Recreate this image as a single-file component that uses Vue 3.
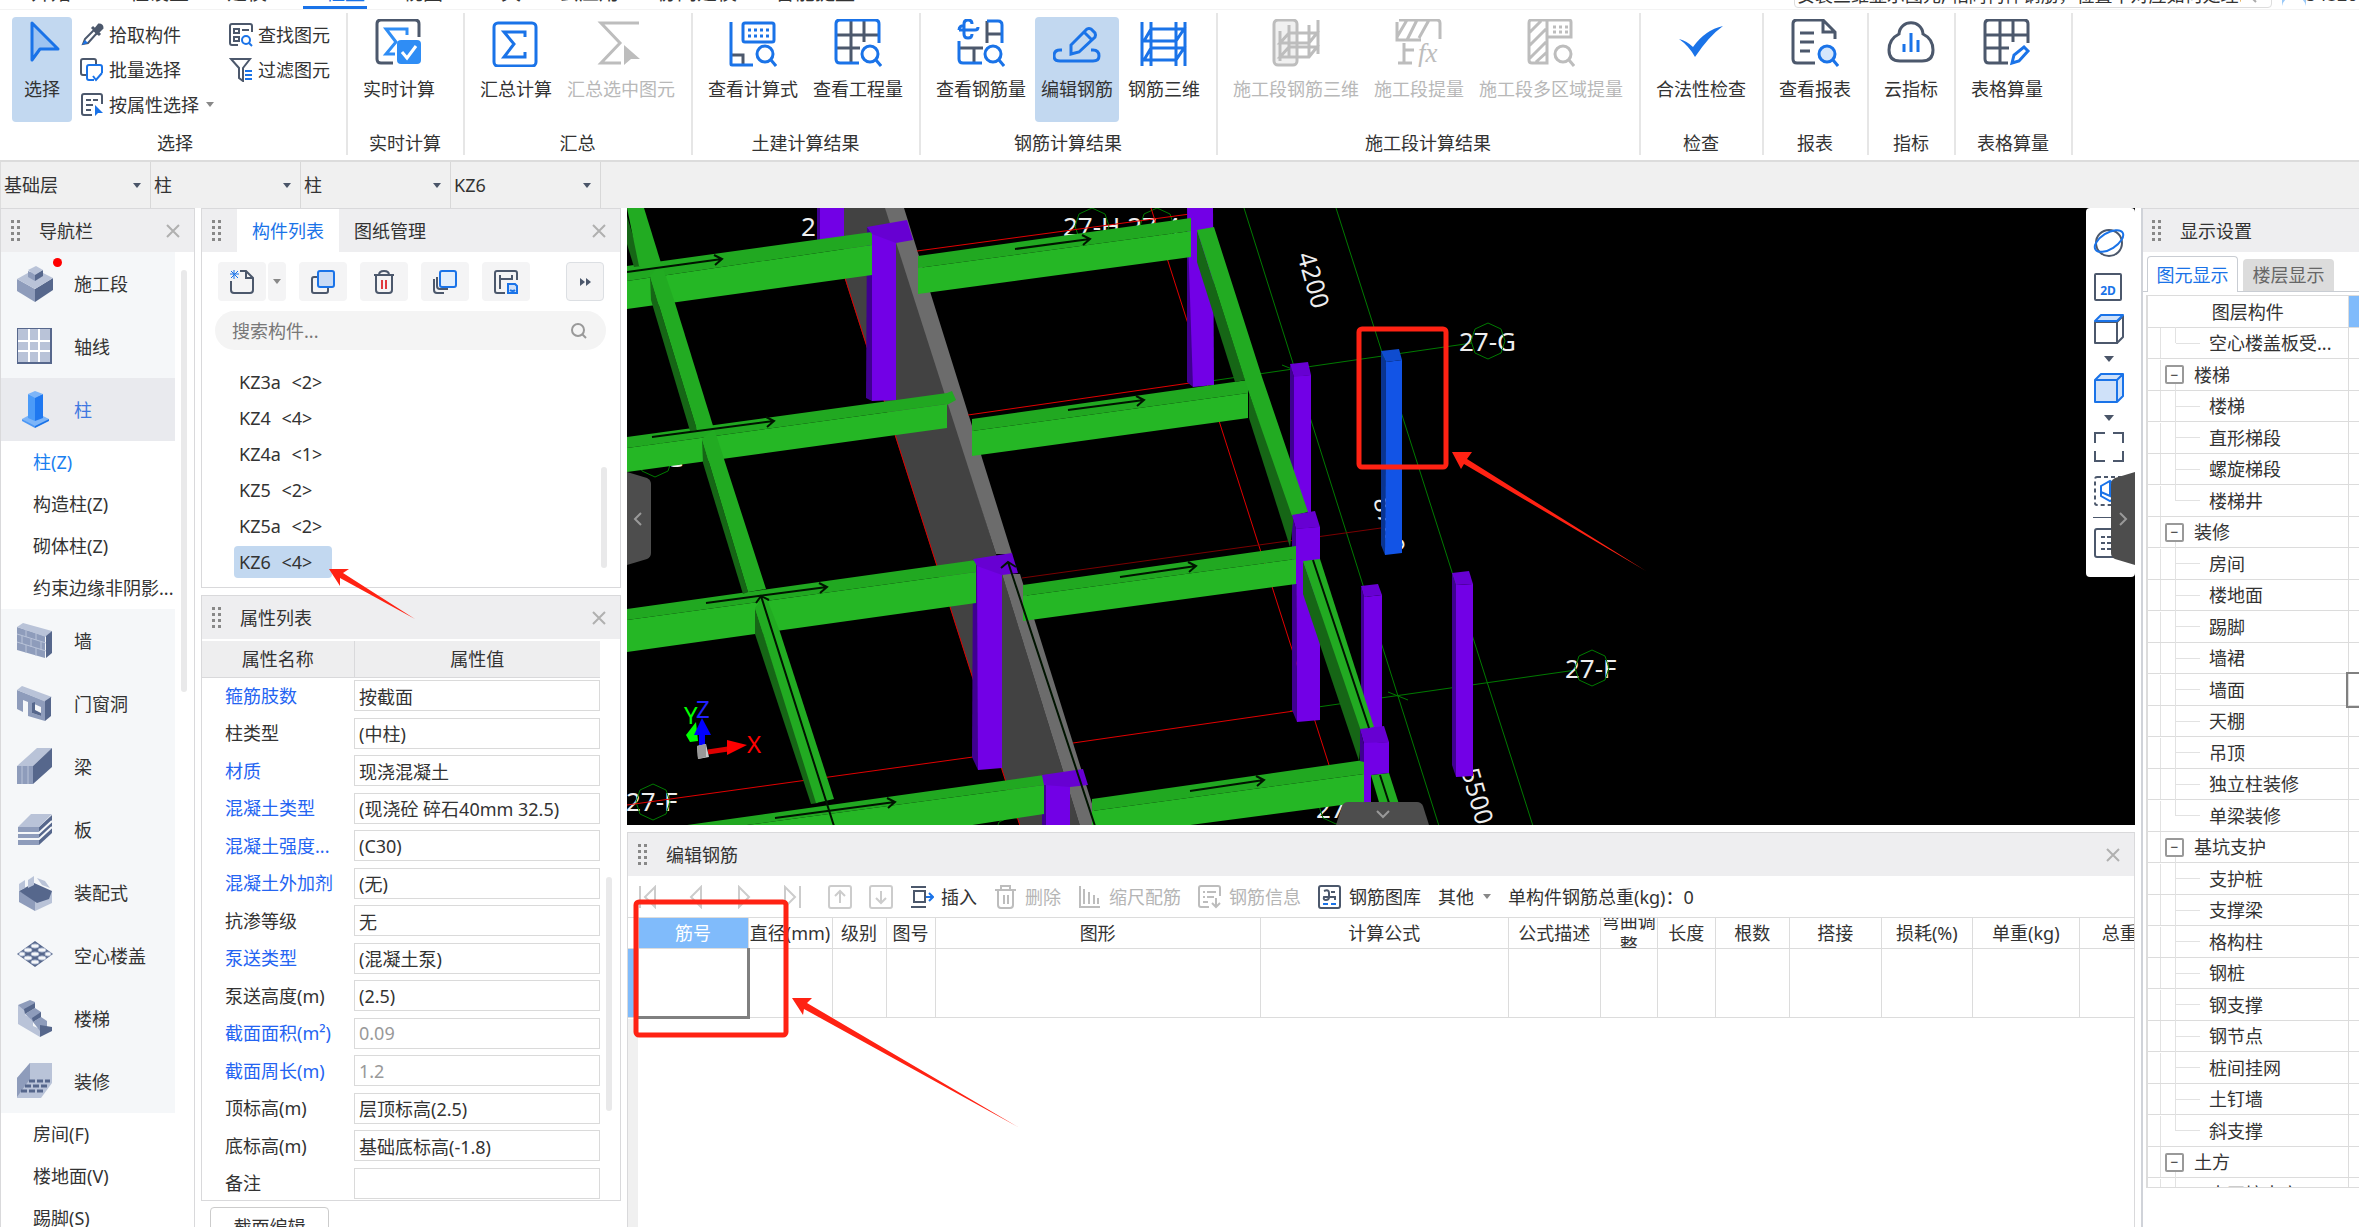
<script setup>
import { ref } from 'vue'

const B = '#1a73e8'
const S = '#4c586c'
const G = '#bdbdbd'

const tabs = ['开始', '工程设置', '建模', '工程量', '视图', '工具', '云应用', '协同建模', '智能提量']

const magnifier = (c, f = 'none') =>
  `<g stroke="${c}" stroke-width="3" fill="${f}"><circle cx="36" cy="35" r="8"/><path d="M42 41l5 6"/></g>`
const ladder = (c) =>
  `<g stroke="${c}" stroke-width="3" fill="none"><path d="M2 3v44M11 3v44M36 3v44M45 3v44M11 10h33l-8 12H4zM11 29h33l-8 12H4z"/></g>`
const shade = ['#b9c3d8', '#8e9cbb', '#56678c']

const icons = {
  select: `<path d="M14 4v37l8-11h18z" fill="#9ec3f0" stroke="${B}" stroke-width="3" stroke-linejoin="round"/>`,
  realtime: `<path d="M18 44H6q-4 0-4-4V5q0-4 4-4h34q4 0 4 4v13" fill="none" stroke="${S}" stroke-width="3"/><path d="M32 16v-6H11l10 13-10 12h9" fill="none" stroke="#2f8df5" stroke-width="3"/><rect x="22" y="21" width="24" height="24" rx="4" fill="#2f8df5"/><path d="M27 33l5 6 9-12" fill="none" stroke="#fff" stroke-width="3"/>`,
  sum: `<rect x="2" y="4" width="42" height="43" rx="4" fill="none" stroke="${B}" stroke-width="3"/><path d="M33 18v-5H12l10 12-10 13h21v-5" fill="none" stroke="${B}" stroke-width="3"/>`,
  sumSel: `<path d="M42 4H4l19 20L4 44h20" fill="none" stroke="${G}" stroke-width="3"/><path d="M27 26l16 14h-9l-7 6z" fill="${G}"/>`,
  formula: `<g fill="none" stroke-width="3"><path d="M2 36h12v10" stroke="${S}"/><path d="M2 3v42q0 1 1 1h21" stroke="${B}"/><rect x="14" y="4" width="31" height="19" rx="2" stroke="${B}"/></g><path d="M19 11h22M19 17h22" stroke="${B}" stroke-width="3" stroke-dasharray="3 3"/>${magnifier(B)}`,
  quantity: `<g fill="none" stroke-width="3"><path d="M17 1v43M30 1v22M2 16h43M2 29h24" stroke="${S}"/><path d="M45 24V5q0-4-4-4H6q-4 0-4 4v35q0 4 4 4h19" stroke="${B}"/></g>${magnifier(B)}`,
  rebarQty: `<g fill="none" stroke-width="3"><path d="M2 11h16q3 0 3-3M15 5q0-4-4-4t-4 4v10q0 4 4 4t4-4M8 7q-6-1-6 4" stroke="${B}"/><path d="M30 24V2M30 15h15M2 29h24M17 29v15" stroke="${S}"/><path d="M30 2h11q4 0 4 4v18M2 22v18q0 4 4 4h19" stroke="${B}"/></g>${magnifier(B)}`,
  editRebar: `<g fill="none" stroke="${B}" stroke-width="3"><path d="M9 31H7q-6 0-6 6 0 5 6 5h33q6 0 6-5 0-6-6-6h-2" /><path d="M18 35v-9l16-16q2-1 4 0l4 4q1 2 0 4L26 33zM31 13l7 7"/></g>`,
  rebar3d: ladder(B),
  stage3d: `<rect x="2" y="1" width="23" height="45" rx="4" fill="#f0f0f0" stroke="${G}" stroke-width="3"/><g stroke="${G}" stroke-width="3" fill="none"><path d="M8 12v30M17 6v32M37 6v32M46 1v34M17 14h28l-8 10H8zM17 28h28l-8 10H8z"/></g>`,
  stageQty: `<g stroke="${G}" stroke-width="3" fill="none"><path d="M4 1h38q3 0 3 3v16M2 3v18h24M12 21L22 1M24 19L34 1M2 18L12 1M9 24v20M3 44h14M9 31h10"/></g><text x="23" y="43" font-family="Liberation Serif, serif" font-style="italic" font-size="27" fill="${G}">fx</text>`,
  stageArea: `<g stroke="${G}" stroke-width="3" fill="none"><path d="M4 1h16v43H5q-3 0-3-3V4q0-3 2-3M2 14L14 2M2 27l17-17M2 40l17-17M9 43l11-10M20 1h22q2 0 2 2v15H20"/><path d="M26 8h15M26 13h15" stroke-dasharray="3 3"/></g>${magnifier(G)}`,
  check: `<path d="M2 20q8 2 14 8Q28 11 46 7 32 17 18 38 12 27 2 20z" fill="${B}"/>`,
  report: `<g fill="none" stroke="${S}" stroke-width="3"><path d="M24 44H6q-4 0-4-4V5q0-4 4-4h26l12 12v7M32 1v12h12M9 14h14M9 23h14M9 32h10"/></g>${magnifier(B, '#d5e6fb')}`,
  cloud: `<path d="M12 15C13 0 35 0 36 15q10 5 10 16 0 11-11 11H13Q2 42 2 31q0-11 10-16z" fill="none" stroke="${S}" stroke-width="3"/><path d="M17 25v8M24 14v19M31 21v12" stroke="${B}" stroke-width="3"/>`,
  tableCalc: `<g fill="none" stroke-width="3"><path d="M45 24V5q0-4-4-4H6q-4 0-4 4v35q0 4 4 4h19M17 1v43M30 1v22M2 16h43M2 29h24" stroke="${S}"/><path d="M29 44l2-8 10-8 4 4-9 10z" stroke="${B}"/></g>`
}

const smallIcons = {
  picker: `<path d="M3 21l2-5L14 7l3 3-9 10z" fill="none" stroke="${S}" stroke-width="2"/><path d="M12 4l8 8M15 7l4-5q3 0 3 3l-5 5z" stroke="${S}" stroke-width="3" fill="${S}"/><path d="M2 22l3-5 3 3z" fill="${B}"/>`,
  batch: `<rect x="1" y="1" width="15" height="16" rx="2" fill="#fff" stroke="${S}" stroke-width="2"/><path d="M14 22H9q-2 0-2-2V9q0-2 2-2h11q2 0 2 2v6" fill="#fff" stroke="${B}" stroke-width="2"/><path d="M13 18l3 4 6-7" fill="none" stroke="${B}" stroke-width="2"/>`,
  byProp: `<path d="M12 22H4q-2 0-2-2V3q0-2 2-2h16q2 0 2 2v8M6 7h5M13 7h5M6 12h7M6 17h5" fill="none" stroke="${S}" stroke-width="2"/><path d="M15 12l8 8h-5l-3 3z" fill="${B}"/>`,
  find: `<path d="M9 22H3q-2 0-2-2V3q0-2 2-2h18q2 0 2 2v6M5 6h5v4H5zM13 7h7M5 14h5v4H5z" fill="none" stroke="${S}" stroke-width="2"/><circle cx="17" cy="17" r="4" fill="none" stroke="${B}" stroke-width="2"/><path d="M20 20l3 3" stroke="${B}" stroke-width="2"/>`,
  filter: `<path d="M2 1h19l-7 9v13l-4-3V10z" fill="none" stroke="${S}" stroke-width="2"/><path d="M16 13h7M16 17h7M16 21h7" stroke="${B}" stroke-width="2"/>`
}

const groups = [
  { name: '实时计算', wide: true, items: [{ t: '实时计算', i: 'realtime' }] },
  { name: '汇总', items: [{ t: '汇总计算', i: 'sum' }, { t: '汇总选中图元', i: 'sumSel', off: true }] },
  { name: '土建计算结果', items: [{ t: '查看计算式', i: 'formula' }, { t: '查看工程量', i: 'quantity' }] },
  { name: '钢筋计算结果', items: [{ t: '查看钢筋量', i: 'rebarQty' }, { t: '编辑钢筋', i: 'editRebar', on: true }, { t: '钢筋三维', i: 'rebar3d' }] },
  { name: '施工段计算结果', items: [{ t: '施工段钢筋三维', i: 'stage3d', off: true }, { t: '施工段提量', i: 'stageQty', off: true }, { t: '施工段多区域提量', i: 'stageArea', off: true }] },
  { name: '检查', items: [{ t: '合法性检查', i: 'check' }] },
  { name: '报表', items: [{ t: '查看报表', i: 'report' }] },
  { name: '指标', items: [{ t: '云指标', i: 'cloud' }] },
  { name: '表格算量', wide: true, items: [{ t: '表格算量', i: 'tableCalc' }] }
]

const quick = [
  { label: '楼层', v: '基础层' },
  { label: '类别', v: '柱' },
  { label: '类型', v: '柱' },
  { label: '构件', v: 'KZ6' }
]

const [L, M, D] = shade
const navIcons = {
  stage: `<path d="M0 14l18 10v13L0 26z" fill="${M}"/><path d="M18 24l18-11v12L18 37z" fill="${D}"/><path d="M0 14L18 4l18 9-18 11z" fill="${L}"/><path d="M11 6v6l7 4V9z" fill="${M}"/><path d="M18 9v7l8-5V5z" fill="${D}"/><path d="M11 5l8-4 7 4-8 5z" fill="${L}"/>`,
  axis: `<path d="M0 0h35v36H0z" fill="${D}"/><path d="M1 1h32v33H1z" fill="${L}"/><path d="M12 1v33M22 1v33M1 13h32M1 23h32" stroke="#fff" stroke-width="2"/>`,
  column: `<path d="M5 28l13-7 14 7-14 8z" fill="#7db5f8"/><path d="M5 28l13 7v2L5 30z" fill="#4b97f5"/><path d="M18 35l14-7v2l-14 7z" fill="#1a73e8"/><path d="M11 3l7 3v24l-7-3z" fill="#4b9bf8"/><path d="M18 6l8-3v24l-8 3z" fill="#1f78f0"/><path d="M11 3l7-3 8 3-8 4z" fill="#7db5f8"/>`,
  wall: `<path d="M0 5l28 9v22L0 28z" fill="${M}"/><path d="M0 5l6-4 29 8-6 6z" fill="${L}"/><path d="M29 14l6-5v22l-6 5z" fill="${D}"/><path d="M0 12l29 9M0 20l29 9M9 8v7M19 11v7M5 14v8M14 17v8M24 20v8M9 23v8M19 26v8" stroke="${L}" stroke-width="1"/>`,
  door: `<path d="M0 5l28 11v20L11 31V17l-5-2v12l-6-3z" fill="${M}"/><path d="M0 5l5-4 30 11-6 5z" fill="${L}"/><path d="M28 16l6-4v19l-6 5z" fill="${D}"/><path d="M15 18l9 4v9l-9-3z" fill="#f5f7f9"/><path d="M15 18l3-1v8l6 3v3l-9-3z" fill="${D}"/>`,
  beam: `<path d="M0 18h16v18H0z" fill="${M}"/><path d="M0 18L20 0h15L16 18z" fill="${L}"/><path d="M16 18L35 0v19L16 36z" fill="${D}"/><path d="M5 18v18M11 18v18" stroke="${L}"/>`,
  slab: `<path d="M1 16h21v18H1z" fill="${M}"/><path d="M22 16L35 4v18L22 34z" fill="${D}"/><path d="M1 16L14 3h21L22 16z" fill="${L}"/><path d="M1 22h21l13-12M1 28h21l13-12" fill="none" stroke="#f5f7f9" stroke-width="2"/>`,
  prefab: `<path d="M2 17l16 8v12L2 28z" fill="${M}"/><path d="M18 25l17-8v12l-17 8z" fill="${L}"/><path d="M2 17l15-8 18 8-3 8-12 4z" fill="${D}"/><path d="M2 10l6-4v8l-6 3zM11 6l6-4v9l-6 3z" fill="${L}"/><path d="M20 4l8 3 5 7-8-3z" fill="${L}"/>`,
  hollow: `<path d="M0 17L18 4l18 13-18 13z" fill="${D}"/><g fill="#f5f7f9" stroke="${L}" stroke-width="1"><ellipse cx="18" cy="9" rx="4" ry="2"/><ellipse cx="11" cy="13" rx="4" ry="2"/><ellipse cx="25" cy="13" rx="4" ry="2"/><ellipse cx="18" cy="17" rx="4" ry="2"/><ellipse cx="5" cy="17" rx="3" ry="2"/><ellipse cx="31" cy="17" rx="3" ry="2"/><ellipse cx="11" cy="21" rx="4" ry="2"/><ellipse cx="25" cy="21" rx="4" ry="2"/><ellipse cx="18" cy="25" rx="4" ry="2"/></g>`,
  stair: `<path d="M1 5l7 3v7l8 4v7l7 3v8L1 24z" fill="${L}"/><path d="M1 5l12-5 5 2v5L8 11zM8 14l10-6 6 4v5l-8 4zM16 22l8-5 6 4v6l-7 4z" fill="${M}"/><path d="M7 9l11-6v5L8 14zM15 18l9-6v5l-8 5zM23 25l12 2v4L23 37z" fill="${D}"/>`,
  decor: `<path d="M0 15L13 0h22v20L24 35H0z" fill="${L}"/><path d="M0 15L13 0v16L0 34z" fill="${M}"/><path d="M12 18h21M8 23h22M4 28h22" stroke="${D}" stroke-width="3" stroke-dasharray="6 2"/>`
}
const nav = [
  { t: '施工段', i: 'stage', dot: true },
  { t: '轴线', i: 'axis' },
  { t: '柱', i: 'column', on: true, sub: ['柱(Z)', '构造柱(Z)', '砌体柱(Z)', '约束边缘非阴影...'] },
  { t: '墙', i: 'wall' },
  { t: '门窗洞', i: 'door' },
  { t: '梁', i: 'beam' },
  { t: '板', i: 'slab' },
  { t: '装配式', i: 'prefab' },
  { t: '空心楼盖', i: 'hollow' },
  { t: '楼梯', i: 'stair' },
  { t: '装修', i: 'decor', sub: ['房间(F)', '楼地面(V)', '踢脚(S)'] }
]

const listTools = [
  { l: '复制', s: `<rect x="1" y="7" width="16" height="16" rx="2" fill="none" stroke="${S}" stroke-width="2"/><rect x="7" y="1" width="16" height="16" rx="2" fill="#c9dbf5" stroke="${B}" stroke-width="2"/>` },
  { l: '删除', s: `<path d="M2 5h20M7 5q0-4 5-4t5 4M4 5v15q0 3 3 3h10q3 0 3-3V5" fill="none" stroke="${S}" stroke-width="2"/><path d="M10 10v9M14 10v9" stroke="#e0393e" stroke-width="2"/>` },
  { l: '层间复制', s: `<path d="M1 9v11q0 3 3 3h7M4 7v9q0 3 3 3h8" fill="none" stroke="${S}" stroke-width="2"/><rect x="7" y="1" width="16" height="16" rx="2" fill="#e2eefc" stroke="${B}" stroke-width="2"/>` },
  { l: '存档', s: `<path d="M11 23H3q-2 0-2-2V3q0-2 2-2h18q2 0 2 2v7M6 5v14M18 5v5M6 9h12" fill="none" stroke="${S}" stroke-width="2"/><path d="M14 14h7l2 2v7h-9zM16 20q3 2 5 0" fill="#cfe0f8" stroke="${B}" stroke-width="2"/>` }
]
const members = [['KZ3a', 2], ['KZ4', 4], ['KZ4a', 1], ['KZ5', 2], ['KZ5a', 2], ['KZ6', 4]]
const current = ref('KZ6')

const props = [
  ['箍筋肢数', '按截面', 1],
  ['柱类型', '(中柱)'],
  ['材质', '现浇混凝土', 1],
  ['混凝土类型', '(现浇砼 碎石40mm 32.5)', 1],
  ['混凝土强度...', '(C30)', 1],
  ['混凝土外加剂', '(无)', 1],
  ['抗渗等级', '无'],
  ['泵送类型', '(混凝土泵)', 1],
  ['泵送高度(m)', '(2.5)'],
  ['截面面积(m²)', '0.09', 1, 1],
  ['截面周长(m)', '1.2', 1, 1],
  ['顶标高(m)', '层顶标高(2.5)'],
  ['底标高(m)', '基础底标高(-1.8)'],
  ['备注', '']
]

const cols = [
  ['筋号', 110], ['直径(mm)', 84], ['级别', 54], ['图号', 49], ['图形', 325], ['计算公式', 248],
  ['公式描述', 92], ['弯曲调整', 57], ['长度', 58], ['根数', 74], ['搭接', 92], ['损耗(%)', 91], ['单重(kg)', 107], ['总重(kg)', 112]
]
const rebarTools = [
  { t: '插入', s: `<path d="M1 2h15M1 22h15M4 6h11v11H4z" fill="none" stroke="${S}" stroke-width="2"/><path d="M16 12h6M19 8l4 4-4 4" fill="none" stroke="${B}" stroke-width="2"/>` },
  { t: '删除', off: true, s: `<path d="M1 5h21M7 5V1h9v4M4 5v15q0 3 3 3h9q3 0 3-3V5M10 10v9M14 10v9" fill="none" stroke="${G}" stroke-width="2"/>` },
  { t: '缩尺配筋', off: true, s: `<path d="M2 1v22M6 4v15M11 7v12M16 10v9M20 13v6M2 22h20" fill="none" stroke="${G}" stroke-width="2"/>` },
  { t: '钢筋信息', off: true, s: `<path d="M11 22H3q-2 0-2-2V3q0-2 2-2h17q2 0 2 2v8M5 7h2M9 7h9M5 12h2M9 12h7M5 17h5M18 13v9M14 18l4 4 4-4" fill="none" stroke="${G}" stroke-width="2"/>` },
  { t: '钢筋图库', s: `<rect x="1" y="1" width="21" height="22" rx="2" fill="none" stroke="${S}" stroke-width="2"/><path d="M6 6q5-2 5 2v4q0 3-3 3t-2-3h11v3M13 7h4" fill="none" stroke="${S}" stroke-width="2"/><path d="M5 19h5M13 19h5" stroke="${B}" stroke-width="2"/>` }
]

const tree = [
  { t: '空心楼盖板受...', end: true },
  { t: '楼梯', g: true }, { t: '楼梯' }, { t: '直形梯段' }, { t: '螺旋梯段' }, { t: '楼梯井', end: true },
  { t: '装修', g: true }, { t: '房间' }, { t: '楼地面' }, { t: '踢脚' }, { t: '墙裙' }, { t: '墙面', focus: true }, { t: '天棚' }, { t: '吊顶' }, { t: '独立柱装修' }, { t: '单梁装修', end: true },
  { t: '基坑支护', g: true }, { t: '支护桩' }, { t: '支撑梁' }, { t: '格构柱' }, { t: '钢桩' }, { t: '钢支撑' }, { t: '钢节点' }, { t: '桩间挂网' }, { t: '土钉墙' }, { t: '斜支撑', end: true },
  { t: '土方', g: true }, { t: '大开挖土方' }
]

// 3D scene: beams run [x1, yTop1, yMid1, yBottom1, x2, yTop2, yMid2, yBottom2]
const beams = [
  [627, 266, 281, 309, 872, 232, 245, 275],
  [918, 256, 268, 294, 1191, 218, 231, 257],
  [627, 437, 448, 472, 947, 393, 404, 428],
  [972, 419, 431, 456, 1248, 380, 393, 418],
  [627, 609, 620, 652, 976, 560, 572, 603],
  [1023, 585, 596, 621, 1296, 546, 559, 584],
  [680, 826, 834, 870, 1044, 775, 785, 814],
  [1092, 799, 811, 838, 1364, 760, 774, 802]
]
const beamTop = (b) => `${b[0]},${b[1]} ${b[4]},${b[5]} ${b[4]},${b[6]} ${b[0]},${b[2]}`
const beamFront = (b) => `${b[0]},${b[2]} ${b[4]},${b[6]} ${b[4]},${b[7]} ${b[0]},${b[3]}`
const beamArrows = [
  [627, 272, 722, 259], [1015, 249, 1090, 239], [652, 437, 774, 421], [1068, 410, 1144, 400],
  [706, 603, 827, 587], [1120, 577, 1196, 566], [775, 818, 895, 802], [1190, 791, 1264, 780]
]
const hexes = [[1488, 341], [1592, 668], [653, 802], [1092, 226], [1157, 226], [655, 459], [1336, 806], [1012, 834]]
const hex = ([x, y]) => `${x},${y - 18} ${x + 13},${y - 12} ${x + 17},${y} ${x + 13},${y + 12} ${x},${y + 18} ${x - 13},${y + 12} ${x - 17},${y} ${x - 13},${y - 12}`
</script>

<template>
  <div class="app">
    <header class="ribbon">
      <div class="tabstrip">
        <nav class="tabs">
          <a v-for="t in tabs" :key="t" href="#" :class="{ on: t === '工程量' }">{{ t }}</a>
        </nav>
        <div class="account">
          <div class="help">
            <span>安装三维显示图元, 相同构件钢筋，位置不对应如何处理?</span>
            <svg width="16" height="16" viewBox="0 0 16 16" fill="none" stroke="#aaa" stroke-width="2"><circle cx="7" cy="7" r="5" /><path d="M11 11l4 4" /></svg>
          </div>
          <svg class="avatar" width="24" height="24" viewBox="0 0 24 24"><rect width="24" height="24" fill="#9ccaf8" /><path d="M0 24q2-9 12-9t12 9z" fill="#fff" /></svg>
          <span>54826</span>
        </div>
      </div>
      <div class="groups">
        <section class="group first">
          <div class="tools">
            <button class="big on pick"><svg viewBox="0 0 48 48" v-html="icons.select" /><span>选择</span></button>
            <div class="col">
              <button class="small"><svg viewBox="0 0 24 24" v-html="smallIcons.picker" />拾取构件</button>
              <button class="small"><svg viewBox="0 0 24 24" v-html="smallIcons.batch" />批量选择</button>
              <button class="small"><svg viewBox="0 0 24 24" v-html="smallIcons.byProp" />按属性选择<i class="tri" /></button>
            </div>
            <div class="col">
              <button class="small"><svg viewBox="0 0 24 24" v-html="smallIcons.find" />查找图元</button>
              <button class="small"><svg viewBox="0 0 24 24" v-html="smallIcons.filter" />过滤图元</button>
            </div>
          </div>
          <h2>选择</h2>
        </section>
        <section v-for="g in groups" :key="g.name" class="group" :class="{ wide: g.wide }">
          <div class="tools">
            <button v-for="b in g.items" :key="b.t" class="big" :class="{ on: b.on }" :disabled="b.off">
              <svg viewBox="0 0 48 48" v-html="icons[b.i]" /><span>{{ b.t }}</span>
            </button>
          </div>
          <h2>{{ g.name }}</h2>
        </section>
      </div>
    </header>

    <div class="quick">
      <label v-for="q in quick" :key="q.label">
        <select :aria-label="q.label"><option>{{ q.v }}</option></select><i class="tri dark" />
      </label>
    </div>

    <main>
      <aside class="panel nav">
        <div class="head"><i class="grip" /><b>导航栏</b><button class="close" aria-label="关闭"><svg viewBox="0 0 14 14"><path d="M1 1l12 12M13 1L1 13" /></svg></button></div>
        <div class="navbody">
          <div class="navlist">
            <template v-for="n in nav" :key="n.t">
              <button class="cat" :class="{ on: n.on }">
                <span class="ico"><svg viewBox="0 0 36 38" v-html="navIcons[n.i]" /><i v-if="n.dot" class="dot" /></span>{{ n.t }}
              </button>
              <template v-if="n.sub">
                <a v-for="(s, k) in n.sub" :key="s" href="#" class="sub" :class="{ on: n.on && k === 0 }">{{ s }}</a>
              </template>
            </template>
          </div>
          <div class="rail"><i class="thumb navthumb" /></div>
        </div>
      </aside>

      <div class="middle">
        <section class="panel list">
          <div class="head">
            <i class="grip" />
            <button class="ptab on">构件列表</button><button class="ptab">图纸管理</button>
            <button class="close" aria-label="关闭"><svg viewBox="0 0 14 14"><path d="M1 1l12 12M13 1L1 13" /></svg></button>
          </div>
          <div class="ltools">
            <div class="split">
              <button aria-label="新建"><svg viewBox="0 0 24 24"><path d="M1 11v9q0 3 3 3h16q3 0 3-3V8l-7-7h-6M16 1v7h7" fill="none" stroke="#4c586c" stroke-width="2" /><path d="M1 1l7 7M8 1L1 8M4 0v9M0 4h9" stroke="#1a73e8" /></svg></button>
              <button class="more" aria-label="更多新建"><i class="tri" /></button>
            </div>
            <button v-for="t in listTools" :key="t.l" :aria-label="t.l"><svg viewBox="0 0 24 24" v-html="t.s" /></button>
            <button class="expand" aria-label="展开"><svg viewBox="0 0 24 24"><path d="M7 8l5 4-5 4zM13 8l5 4-5 4z" fill="#4c586c" /></svg></button>
          </div>
          <div class="search">
            <input type="text" placeholder="搜索构件..." aria-label="搜索构件" />
            <svg viewBox="0 0 16 16" fill="none" stroke="#999" stroke-width="2"><circle cx="7" cy="7" r="6" /><path d="M11 11l4 4" /></svg>
          </div>
          <div class="members">
            <div class="mlist">
              <button v-for="m in members" :key="m[0]" :class="{ on: m[0] === current }" @click="current = m[0]">{{ m[0] }} <span>&lt;{{ m[1] }}&gt;</span></button>
            </div>
            <div class="rail"><i class="thumb listthumb" /></div>
          </div>
        </section>

        <section class="panel props">
          <div class="head"><i class="grip" /><b>属性列表</b><button class="close" aria-label="关闭"><svg viewBox="0 0 14 14"><path d="M1 1l12 12M13 1L1 13" /></svg></button></div>
          <div class="pbody">
            <table>
              <thead><tr><th>属性名称</th><th>属性值</th></tr></thead>
              <tbody>
                <tr v-for="(p, k) in props" :key="p[0]">
                  <td :class="{ pub: p[2] }"><label :for="'p' + k">{{ p[0] }}</label></td>
                  <td><input :id="'p' + k" type="text" :value="p[1]" :disabled="!!p[3]" /></td>
                </tr>
              </tbody>
            </table>
            <div class="rail"><i class="thumb propthumb" /></div>
          </div>
        </section>
        <button class="section-edit">截面编辑</button>
      </div>

      <div class="center">
        <div class="view">
          <svg class="scene" viewBox="627 208 1508 617" preserveAspectRatio="xMinYMin slice">
            <rect x="627" y="208" width="1508" height="617" fill="#000" />
            <g stroke="#007a00" fill="none">
              <path d="M1244 208L1439 826M1336 208L1533 826M1190 384L1472 343M1290 711L1576 670M1388 692l20 8M1282 365l10 4" />
            </g>
            <g fill="#eee" font-size="26">
              <text x="801" y="236">2</text>
              <text x="1063" y="236">27-H 27-4</text>
              <text x="1459" y="351">27-G</text>
              <text x="1565" y="678">27-F</text>
              <text x="626" y="811">27-F</text>
              <text x="1316" y="818">27-E</text>
              <text x="627" y="467">27-G</text>
              <text transform="translate(1297 255) rotate(74)" font-size="25">4200</text>
              <text transform="translate(1461 771) rotate(74)" font-size="25">5500</text>
              <text transform="translate(1373 500) rotate(74)" font-size="25">8700</text>
            </g>
            <g stroke="#007a00" fill="none"><polygon v-for="(h, k) in hexes" :key="k" :points="hex(h)" /></g>
            <polygon points="844,208 889,208 1080,826 1020,826 844,276" fill="#424242" />
            <polygon points="885,208 904,208 1012,554 996,554" fill="#6c6c6c" />
            <polygon points="1002,574 1020,574 1099,826 1080,826" fill="#6c6c6c" />
            <g stroke="#e00000" fill="none">
              <path d="M917 251L1190 214M1151 208L1329 765M845 278L1020 826M968 415L1190 383M1073 743L1294 711M627 805L973 757" />
              <path d="M1022 578L1381 528" stroke="#7a0000" />
            </g>
            <g fill="#3f0090">
              <polygon points="817,208 821,208 821,242 817,242" />
              <polygon points="867,227 872,234 872,401 866,398" />
              <polygon points="1187,208 1193,257 1193,387 1187,382" />
              <polygon points="973,559 978,566 978,770 972,757" />
              <polygon points="1042,775 1046,784 1046,826 1042,826" />
              <polygon points="1290,364 1294,377 1294,480 1290,470" />
              <polygon points="1292,515 1296,529 1297,722 1292,710" />
              <polygon points="1361,586 1364,597 1364,735 1361,720" />
              <polygon points="1452,573 1456,585 1456,777 1452,765" />
            </g>
            <g fill="#7200e6">
              <polygon points="820,208 844,208 844,242 820,242" />
              <polygon points="872,232 896,240 896,400 872,401" />
              <polygon points="1187,208 1213,208 1214,385 1193,387" />
              <polygon points="977,564 1002,572 1002,768 978,770" />
              <polygon points="1046,784 1070,784 1070,826 1046,826" />
              <polygon points="1294,376 1311,375 1311,520 1294,480" />
              <polygon points="1296,529 1320,527 1320,720 1297,722" />
              <polygon points="1364,597 1382,595 1382,740 1364,735" />
              <polygon points="1456,585 1473,584 1473,776 1456,777" />
            </g>
            <g v-for="(b, k) in beams" :key="k">
              <polygon :points="beamTop(b)" fill="#21a821" /><polygon :points="beamFront(b)" fill="#25b725" />
            </g>
            <polygon points="947,393 952,391 956,400 947,405" fill="#21a821" />
            <g fill="#166616">
              <polygon points="627,216 642,266 634,267 627,244" />
              <polygon points="650,276 651,300 690,431 697,430" />
              <polygon points="702,439 703,463 743,594 748,592" />
              <polygon points="755,608 755,634 811,804 818,803" />
              <polygon points="1197,230 1197,262 1235,382 1245,380" />
              <polygon points="1249,393 1249,418 1290,547 1294,515" />
              <polygon points="1303,561 1303,594 1359,761 1362,729" />
            </g>
            <g fill="#22ab22">
              <polygon points="627,208 644,208 661,263 645,270 639,266" />
              <polygon points="650,276 661,262 675,303 714,429 697,430" />
              <polygon points="702,439 714,428 724,459 766,589 748,592" />
              <polygon points="755,608 765,594 780,632 834,799 816,803" />
              <polygon points="1197,230 1214,227 1262,377 1308,512 1292,516 1249,393" />
              <polygon points="1303,561 1320,559 1374,727 1361,731" />
              <polygon points="1371,775 1389,773 1406,826 1386,826" />
            </g>
            <g fill="#6700d2">
              <polygon points="867,227 907,220 913,240 896,243 872,234" />
              <polygon points="973,559 1012,553 1018,573 1002,575 977,566" />
              <polygon points="1042,775 1083,769 1088,785 1070,787 1044,785" />
              <polygon points="1290,364 1308,362 1311,375 1294,377" />
              <polygon points="1361,586 1378,584 1382,595 1364,597" />
              <polygon points="1452,573 1469,571 1473,584 1456,585" />
              <polygon points="1292,515 1315,511 1320,527 1296,529" />
              <polygon points="1360,729 1384,726 1389,742 1364,744" />
            </g>
            <polygon points="1296,529 1320,527 1320,558 1303,561 1303,584 1296,584" fill="#7200e6" />
            <polygon points="1364,743 1389,742 1389,773 1371,775 1371,803 1364,803" fill="#7200e6" />
            <polygon points="1360,729 1364,744 1364,762 1360,761" fill="#3f0090" />
            <polygon points="1381,351 1386,362 1385,555 1381,545" fill="#0a3490" />
            <polygon points="1386,362 1402,360 1402,553 1385,555" fill="#1254e6" />
            <polygon points="1381,351 1399,349 1402,360 1386,362" fill="#0f4ccf" />
            <g stroke="#001400" stroke-width="2" fill="none">
              <path d="M761 596L834 826M756 603l5-7 8 4M1008 562L1095 826M1001 568l7-6 8 5M1313 560L1369 728M1380 775L1390 806" />
              <path v-for="(a, k) in beamArrows" :key="k" :d="`M${a[0]} ${a[1]}L${a[2]} ${a[3]}m-8 -4l8 4l-7 6`" />
            </g>
            <g font-size="24">
              <text x="684" y="724" fill="#0f0">Y</text>
              <path d="M696 722l-10 13 4 7 8-1z" fill="#0f0" />
              <text x="696" y="718" fill="#22f">Z</text>
              <path d="M702 718l9 17H694z" fill="#00f" /><rect x="699" y="734" width="6" height="14" fill="#00f" />
              <path d="M708 752l20-3" stroke="#d00" stroke-width="5" /><path d="M727 740v15l20-10z" fill="#f00" />
              <path d="M697 746l9-2 3 13-11 2z" fill="#ccc" /><path d="M697 746l9-2v13l-8 2z" fill="#999" />
              <text x="747" y="753" fill="#f00">X</text>
            </g>
          </svg>
          <button class="handle left" aria-label="收起左侧"><svg width="24" height="93" viewBox="0 0 24 93"><path d="M0 0l20 6q4 2 4 6v69q0 4-4 6L0 93z" fill="#4d4d4d" /><path d="M14 41l-6 6 6 6" fill="none" stroke="#999" stroke-width="2" /></svg></button>
          <button class="handle bottom" aria-label="收起底部"><svg width="93" height="23" viewBox="0 0 93 23"><path d="M0 23L6 4q2-4 6-4h69q4 0 6 4l6 19z" fill="#4d4d4d" /><path d="M41 9l6 6 6-6" fill="none" stroke="#999" stroke-width="2" /></svg></button>
          <div class="viewtools">
            <button aria-label="动态观察"><svg viewBox="0 0 32 32" fill="none" stroke-width="2"><circle cx="16" cy="16" r="13" stroke="#4c586c" /><ellipse cx="16" cy="14" rx="16" ry="8" transform="rotate(-32 16 14)" stroke="#1a73e8" /></svg></button>
            <button class="two-d">2D</button>
            <button aria-label="视图方向"><svg viewBox="0 0 32 32" stroke-width="2" stroke-linejoin="round"><path d="M2 9h22v21H2z" fill="#fff" stroke="#4c586c" /><path d="M24 9l6-6v21l-6 6z" fill="#fff" stroke="#4c586c" /><path d="M2 8l6-6h22l-6 6z" fill="#cfe1f9" stroke="#1a73e8" /></svg></button>
            <i class="tri dark" />
            <button aria-label="显示样式"><svg viewBox="0 0 32 32" stroke="#1a73e8" stroke-width="2" stroke-linejoin="round" fill="#cfe1f9"><path d="M2 8h22v22H2zM24 8l6-6v22l-6 6zM2 8l6-6h22l-6 6z" /></svg></button>
            <i class="tri dark" />
            <button aria-label="全屏"><svg viewBox="0 0 32 32" fill="none" stroke="#4c586c" stroke-width="2"><path d="M2 12V2h10M20 2h10v10M30 20v10H20M12 30H2V20" /></svg></button>
            <button aria-label="局部三维"><svg viewBox="0 0 32 32" fill="none" stroke-width="2"><rect x="2" y="2" width="28" height="28" rx="2" stroke="#4c586c" stroke-dasharray="4 3" /><path d="M8 11l9-5 8 5v10l-8 5-9-5zM8 17l9 4V6" stroke="#1a73e8" /></svg></button>
            <hr />
            <button aria-label="显示列表"><svg viewBox="0 0 32 32" fill="none" stroke="#4c586c" stroke-width="2"><rect x="2" y="2" width="28" height="28" rx="2" /><path d="M8 10h4M14 10h10M8 16h4M14 16h10M8 22h4M14 22h10" /></svg></button>
            <span class="handle right"><svg width="24" height="93" viewBox="0 0 24 93"><path d="M24 0L4 6Q0 8 0 12v69q0 4 4 6l20 6z" fill="#4d4d4d" /><path d="M9 41l6 6-6 6" fill="none" stroke="#999" stroke-width="2" /></svg></span>
          </div>
        </div>

        <section class="panel rebar">
          <div class="head"><i class="grip" /><b>编辑钢筋</b><button class="close" aria-label="关闭"><svg viewBox="0 0 14 14"><path d="M1 1l12 12M13 1L1 13" /></svg></button></div>
          <div class="rtools">
            <div class="steps">
              <button disabled aria-label="首条"><svg viewBox="0 0 24 24"><path d="M4 1v22M19 2v20L9 12z" /></svg></button>
              <button disabled aria-label="上一条"><svg viewBox="0 0 24 24"><path d="M17 2v20L7 12z" /></svg></button>
              <button disabled aria-label="下一条"><svg viewBox="0 0 24 24"><path d="M7 2v20l10-10z" /></svg></button>
              <button disabled aria-label="末条"><svg viewBox="0 0 24 24"><path d="M20 1v22M5 2v20l10-10z" /></svg></button>
            </div>
            <button disabled aria-label="上移"><svg viewBox="0 0 24 24"><rect x="1" y="1" width="22" height="22" rx="2" /><path d="M12 18V6M7 11l5-5 5 5" /></svg></button>
            <button disabled aria-label="下移"><svg viewBox="0 0 24 24"><rect x="1" y="1" width="22" height="22" rx="2" /><path d="M12 6v12M7 13l5 5 5-5" /></svg></button>
            <button v-for="t in rebarTools" :key="t.t" :disabled="t.off"><svg viewBox="0 0 24 24" v-html="t.s" />{{ t.t }}</button>
            <button class="other">其他<i class="tri" /></button>
            <span>单构件钢筋总重(kg)：0</span>
          </div>
          <div class="sheet">
            <table>
              <colgroup><col class="rowno" /><col v-for="c in cols" :key="c[0]" :style="{ width: c[1] + 'px' }" /></colgroup>
              <thead><tr><th></th><th v-for="(c, k) in cols" :key="c[0]" :class="{ on: k === 0 }"><div>{{ c[0] }}</div></th></tr></thead>
              <tbody><tr><td class="rowno on"></td><td v-for="(c, k) in cols" :key="c[0]" :class="{ focus: k === 0 }"></td></tr></tbody>
            </table>
            <div class="gutter" />
          </div>
        </section>
      </div>

      <aside class="display">
        <div class="head"><i class="grip" /><b>显示设置</b></div>
        <div class="dtabs"><button class="on">图元显示</button><button>楼层显示</button></div>
        <div class="tree">
          <table>
            <thead><tr><th>图层构件</th><th class="blue"></th></tr></thead>
            <tbody>
              <tr v-for="(r, k) in tree" :key="k" :class="{ branchhead: r.g, end: r.end }">
                <td>
                  <div class="node"><i class="trunk" /><button v-if="r.g" class="toggle" aria-label="折叠">−</button><i v-else class="branch" />{{ r.t }}</div>
                </td>
                <td :class="{ focus: r.focus }"></td>
              </tr>
            </tbody>
          </table>
        </div>
      </aside>
    </main>

    <svg class="marks" aria-hidden="true">
      <g fill="none" stroke="#ff2213" stroke-width="5"><rect x="1359" y="329" width="87" height="138" rx="3" /><rect x="636" y="902" width="150" height="133" rx="3" /></g>
      <g fill="#ff2213">
        <path d="M1452 452h20l-5 7L1646 571 1464 464l-3 5z" />
        <path d="M792 998h20l-5 5L1018 1127 804 1009l-1 6z" />
        <path d="M329 569h20l-6 4L415 619 340 578v8z" />
      </g>
    </svg>
  </div>
</template>

<style>
html, body { margin: 0; overflow: hidden; }
</style>

<style scoped>
.app { position: relative; display: flex; flex-direction: column; height: 100vh; overflow: hidden; background: #fff; color: #333; font: 18px/24px "Noto Sans", "Noto Sans CJK SC", sans-serif; }
.app *, .app *::before, .app *::after { box-sizing: border-box; }
button, input, select { margin: 0; padding: 0; border: 0; background: none; color: inherit; font: inherit; text-align: left; border-radius: 0; outline: none; }
button { display: flex; align-items: center; white-space: nowrap; }
a { color: inherit; text-decoration: none; }
b { font-weight: 400; }
h2 { margin: 0; font-size: 18px; font-weight: 400; text-align: center; }
svg { display: block; flex: none; }
table { border-collapse: collapse; table-layout: fixed; }
th { font-weight: 400; padding: 0; }
td { padding: 0; }
.tri { flex: none; width: 0; height: 0; border: 4px solid transparent; border-top: 5px solid #888; border-bottom: 0; }
.tri.dark { border-top-color: #4a5568; }

.ribbon { flex: none; border-bottom: 2px solid #dcdcdc; }
.tabstrip { display: flex; justify-content: space-between; align-items: flex-end; height: 10px; overflow: hidden; border-bottom: 1px solid #f3f3f3; }
.tabs { display: flex; gap: 34px; padding-left: 29px; font-size: 20px; }
.tabs a { padding: 0 2px; line-height: 26px; border-bottom: 3px solid transparent; white-space: nowrap; }
.tabs a.on { color: #1a73e8; border-bottom-color: #1a73e8; }
.account { display: flex; align-items: flex-end; white-space: nowrap; height: 30px; }
.help { display: flex; align-items: center; justify-content: space-between; width: 478px; margin-right: 10px; margin-bottom: 1px; padding: 0 14px 0 2px; border: 1px solid #ddd; border-radius: 4px; overflow: hidden; }
.help span { overflow: hidden; }
.avatar { margin-bottom: 3px; }
.account > span { width: 53px; margin-bottom: 3px; }

.groups { display: flex; height: 150px; padding-top: 3px; }
.group { display: flex; flex-direction: column; height: 142px; border-right: 2px solid #e6e6e6; padding: 4px 10px 0 9px; }
.group.wide { padding-right: 22px; }
.group.wide h2 { margin-right: -12px; }
.group h2 { margin-top: 9px; }
.first { padding: 4px 16px 0 12px; }
.first h2 { margin-left: 8px; }
.tools { display: flex; gap: 3px; height: 105px; }
.big { flex-direction: column; padding: 2px 6px 0; border-radius: 4px; }
.big svg { width: 48px; height: 48px; }
.big span { margin-top: 10px; }
.big:disabled { color: #b8b8b8; }
.big.on { background: #c2d8f0; }
.pick { width: 60px; }
.col { display: flex; flex-direction: column; padding-left: 5px; }
.col + .col { padding-left: 12px; }
.small { height: 35px; gap: 5px; }
.small svg { width: 24px; height: 24px; }
.small .tri { margin-left: 2px; }

.quick { flex: none; display: flex; height: 46px; background: #f0f0f0; border-left: 1px solid #ddd; }
.quick label { position: relative; display: flex; align-items: center; width: 150px; border-right: 1px solid #d8d8d8; }
.quick select { appearance: none; width: 100%; height: 100%; padding-left: 3px; }
.quick .tri { position: absolute; right: 9px; pointer-events: none; }

main { flex: 1; min-height: 0; display: grid; grid-template-columns: 195px 420px minmax(0, 1fr) 218px; column-gap: 6px; }
.panel { border: 1px solid #d9d9db; background: #fff; overflow: hidden; min-height: 0; display: flex; flex-direction: column; }
.head { flex: none; display: flex; align-items: center; height: 43px; padding-left: 10px; background: #eeeef0; }
.head b { margin-left: 19px; }
.grip { flex: none; width: 9px; height: 22px; background: repeating-linear-gradient(#eeeef0 0 0px, transparent 0 3px, #eeeef0 3px 6px), linear-gradient(90deg, #888 3px, transparent 3px 6px, #888 6px); }
.close { margin-left: auto; margin-right: 14px; }
.close svg { width: 14px; height: 14px; stroke: #b0b0b0; stroke-width: 2; }
.rail { flex: none; padding-left: 6px; }
.thumb { display: block; width: 6px; border-radius: 3px; background: #e9e9ea; }

.nav { border-bottom: 0; }
.navbody { display: flex; }
.navlist { width: 174px; flex: none; }
.cat { width: 100%; height: 63px; padding-left: 16px; background: #f5f7f9; gap: 21px; }
.cat.on { background: #e9eaee; color: #3f78e0; }
.cat svg { width: 36px; height: 38px; }
.ico { position: relative; }
.dot { position: absolute; right: -9px; top: -7px; width: 9px; height: 9px; border-radius: 5px; background: #f00; }
.sub { display: block; height: 42px; line-height: 42px; padding-left: 32px; white-space: nowrap; }
.sub.on { color: #1a80f0; }
.navthumb { margin-top: 18px; height: 422px; }

.middle { display: flex; flex-direction: column; min-height: 0; }
.list { flex: none; height: 380px; }
.ptab { height: 43px; padding: 0 15px; }
.ptab.on { background: #fff; color: #1a73e8; }
.list .head .grip { margin-right: 16px; }
.ltools { display: flex; gap: 13px; padding: 10px 16px 0; }
.ltools button { width: 48px; height: 39px; justify-content: center; background: #f4f4f5; border-radius: 4px; }
.ltools svg { width: 24px; height: 24px; }
.split { display: flex; gap: 2px; }
.ltools .more { width: 18px; }
.ltools .expand { width: 38px; margin-left: auto; border: 1px solid #dcdfe3; }
.search { display: flex; align-items: center; height: 39px; margin: 10px 14px 0 13px; padding: 0 19px 0 17px; border-radius: 20px; background: #f4f4f4; }
.search input { flex: 1; min-width: 0; }
.search input::placeholder { color: #777; opacity: 1; }
.search svg { width: 16px; height: 16px; }
.members { display: flex; margin-top: 14px; }
.mlist { flex: 1; padding-left: 32px; }
.mlist button { height: 32px; margin: 2px 0 4px; padding: 0 4px 0 5px; border-radius: 4px; min-width: 98px; white-space: pre; }
.mlist button.on { background: #c2d8f0; }
.mlist span { margin-left: 6px; }
.members .rail { padding-right: 13px; }
.listthumb { margin-top: 103px; height: 101px; }

.props { flex: none; height: 606px; margin-top: 7px; }
.pbody { display: flex; }
.props table { width: 398px; margin-top: 2px; }
.props th { height: 36px; background: #eeeeef; text-align: center; border-bottom: 1px solid #d9d9db; }
.props th:first-child { width: 152px; border-right: 1px solid #d9d9db; }
.props tbody tr { height: 37px; }
.props tbody tr:nth-child(even) { height: 38px; }
.props td:first-child { padding-left: 23px; white-space: nowrap; }
.pub { color: #2464f2; }
.props td input { display: block; width: 100%; height: 31px; padding-left: 4px; border: 1px solid #dadada; }
.props td input:disabled { color: #999; }
.propthumb { margin-top: 238px; height: 234px; }
.section-edit { flex: none; align-self: flex-start; justify-content: center; width: 119px; height: 40px; margin: 6px 0 0 9px; border: 1px solid #ccc; border-radius: 4px; }

.center { display: flex; flex-direction: column; min-width: 0; min-height: 0; }
.view { position: relative; flex: none; height: 617px; background: #000; overflow: hidden; }
.scene { width: 100%; height: 100%; }
.handle { position: absolute; }
.handle.left { left: 0; top: 264px; }
.handle.right { right: 0; top: 264px; }
.handle.bottom { left: 47%; bottom: 0; }
.viewtools { position: absolute; right: 0; top: 0; width: 49px; height: 369px; padding: 19px 0 0 7px; border-radius: 4px; background: #fff; display: flex; flex-direction: column; align-items: flex-start; }
.viewtools svg { width: 32px; height: 32px; }
.viewtools .handle svg { width: 24px; height: 93px; }
.viewtools button { flex: none; }
.viewtools > .tri { margin: 11px 0 10px 11px; border-width: 6px 5px 0; }
.viewtools button + button { margin-top: 12px; }
.viewtools .two-d { width: 28px; height: 28px; margin-top: 14px; margin-left: 1px; align-items: flex-end; justify-content: center; border: 2px solid #4c586c; border-radius: 2px; color: #1a73e8; font-size: 12px; font-weight: 700; line-height: 16px; }
.viewtools hr { width: 32px; margin: 10px 0 9px; border: 0; border-top: 1px solid #4c586c; }

.rebar { flex: 1; margin-top: 7px; border-bottom: 0; }
.rtools { flex: none; display: flex; align-items: center; gap: 17px; height: 41px; padding-left: 8px; }
.rtools button { gap: 7px; }
.rtools button:disabled { color: #b5b5b5; }
.rtools svg { width: 24px; height: 24px; fill: none; stroke: #ccc; stroke-width: 2; }
.steps { display: flex; gap: 24px; padding-right: 7px; }
.other .tri { margin-left: 2px; }
.sheet { flex: 1; display: flex; flex-direction: column; overflow: hidden; }
.sheet table { flex: none; width: 1564px; }
.rowno { width: 10px; }
.sheet th, .sheet td { border: 1px solid #dcdcdc; }
.sheet th:first-child, .sheet td:first-child { border-left: 0; }
.sheet th { height: 31px; text-align: center; }
.sheet th div { display: flex; align-items: center; justify-content: center; height: 30px; overflow: hidden; }
.sheet th.on { background: #80bbfb; color: #fff; }
.sheet tbody td { height: 69px; }
.sheet td.on { background: #80bbfb; color: #fff; }
.sheet td.focus { border-right: 3px solid #808080; border-bottom: 3px solid #808080; }
.gutter { flex: 1; width: 10px; background: #f0f0f0; }

.display { border-left: 2px solid #d0d3d9; min-height: 0; overflow: hidden; }
.display .head { height: 44px; padding-left: 9px; border-top: 1px solid #d9d9db; }
.dtabs { display: flex; align-items: flex-end; gap: 5px; height: 40px; padding-left: 4px; border-bottom: 1px solid #c9cdd3; }
.dtabs button { width: 91px; height: 32px; justify-content: center; border-radius: 4px 4px 0 0; background: #dcdcdc; color: #666; }
.dtabs button.on { height: 36px; margin-bottom: -1px; background: #fff; color: #1a73e8; border: 1px solid #c9cdd3; border-bottom: 0; }
.tree { height: 893px; margin: 3px 0 0 3px; border-left: 2px solid #dcdcdc; border-bottom: 1px solid #dcdcdc; overflow: hidden; }
.tree table { width: 100%; }
.tree th, .tree td { border: 1px solid #dcdcdc; border-left: 0; border-right: 0; }
.tree th { height: 32px; text-align: center; }
.tree th:first-child { width: 200px; }
.tree th:first-child, .tree td:first-child { border-right: 1px solid #dcdcdc; }
.tree th.blue { background: #80bbfb; }
.tree tbody tr { height: 31px; }
.tree tbody tr:nth-child(even) { height: 32px; }
.tree td.focus { border: 0; outline: 2px solid #808080; }
.node { position: relative; display: flex; align-items: center; height: 30px; padding-left: 27px; margin-left: 12px; border-left: 1px solid #e2e2e2; white-space: nowrap; }
.trunk { position: absolute; left: 14px; top: -1px; bottom: -1px; border-left: 1px solid #e2e2e2; }
.end .trunk { bottom: 15px; }
.branchhead .trunk { top: 20px; }
.branch { width: 24px; margin: 0 9px 0 -12px; border-top: 1px solid #e2e2e2; }
.branchhead .node { padding-left: 4px; }
.toggle { position: relative; width: 19px; height: 19px; margin-right: 10px; justify-content: center; border: 2px solid #999; border-radius: 2px; background: #fff; font-size: 14px; line-height: 14px; }

.marks { position: absolute; left: 0; top: 0; width: 100%; height: 100%; pointer-events: none; }
</style>
